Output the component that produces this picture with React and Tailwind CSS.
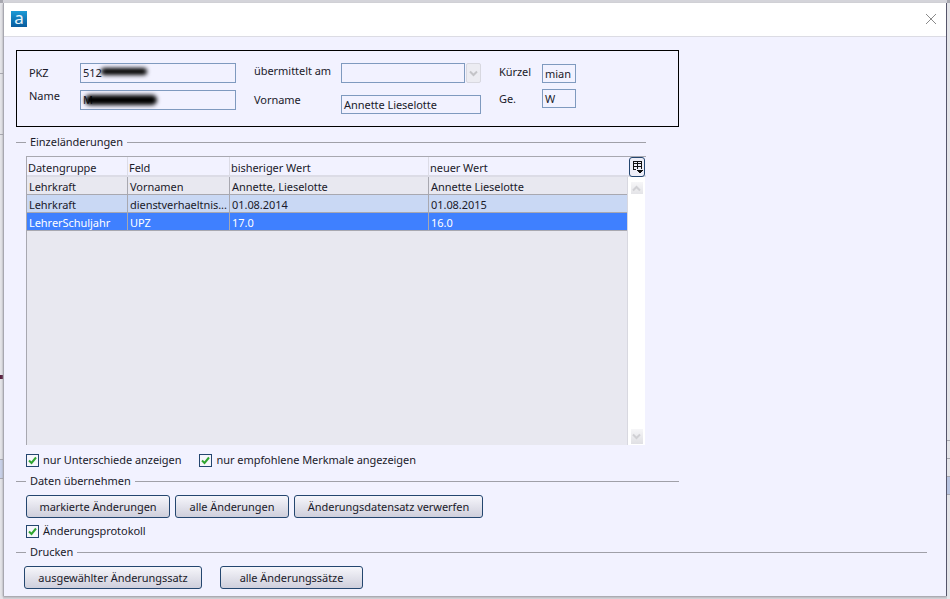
function Legend({ title, width }) {
  return (
    <div className="flex items-center h-[14px]" style={{ width }}>
      <div className="w-[10px] h-px bg-[#a0a0a8]" />
      <span className="px-[4px] text-[#1a1a2a] tracking-[-0.05px]">{title}</span>
      <div className="flex-1 h-px bg-[#a0a0a8]" />
    </div>
  );
}

function Btn({ children, w }) {
  return (
    <button
      style={{ width: w }}
      className="h-[23px] rounded-[3px] border border-[#24466f] bg-gradient-to-b from-[#f6f6fb] to-[#cfcfdc] text-[#1a1a2a] tracking-[-0.05px] flex items-center justify-center"
    >
      {children}
    </button>
  );
}

function Check({ label }) {
  return (
    <div className="flex items-center gap-[4px]">
      <div className="w-[13px] h-[13px] border border-[#24466f] bg-[#f6f6fb] flex items-center justify-center">
        <svg width="11" height="11" viewBox="0 0 11 11">
          <path d="M2 5.5 L4.5 8 L9 2.5" fill="none" stroke="#2fa52f" strokeWidth="2" />
        </svg>
      </div>
      <span className="text-[#1a1a2a] tracking-[-0.05px]">{label}</span>
    </div>
  );
}

function Input({ w, h = "h-[20px]", children }) {
  return (
    <div
      style={{ width: w }}
      className={`${h} relative border border-[#7f9abf] bg-[#f2f2ff] flex items-center pl-[2px] text-[#1a1a2a] tracking-[-0.05px] overflow-hidden`}
    >
      {children}
    </div>
  );
}

const rows = [
  { a: "Lehrkraft", b: "Vornamen", c: "Annette, Lieselotte", d: "Annette Lieselotte", bg: "bg-[#e8e8f0]", text: "text-[#1a1a2a]" },
  { a: "Lehrkraft", b: "dienstverhaeltnis...", c: "01.08.2014", d: "01.08.2015", bg: "bg-[#c9d8f4]", text: "text-[#1a1a2a]" },
  { a: "LehrerSchuljahr", b: "UPZ", c: "17.0", d: "16.0", bg: "bg-[#3f80ff]", text: "text-white" },
];

function Row({ r }) {
  return (
    <div className={`grid grid-cols-[101px_102px_199px_198px] h-[18px] border-b border-[#a8a8b0] ${r.bg} ${r.text} tracking-[-0.05px]`}>
      {[r.a, r.b, r.c].map((t, i) => (
        <div key={i} className="pl-[2px] pt-[2px] border-r border-[#a8a8b0] leading-[15px] whitespace-nowrap">{t}</div>
      ))}
      <div className="pl-[2px] pt-[2px] leading-[15px]">{r.d}</div>
    </div>
  );
}

function Side({ bands }) {
  return (
    <div className="w-[3px] h-full flex flex-col bg-[#e4e4e8]">
      {bands.map((b, i) => (
        <div key={i} style={{ height: b[0], background: b[1] }} />
      ))}
    </div>
  );
}

export default function App() {
  return (
    <div className="w-[950px] h-[599px] bg-[#d4d4da] flex overflow-hidden text-[11px] leading-[14px]" style={{ fontFamily: '"Noto Sans", sans-serif' }}>
      <Side bands={[[3, "#a8a8b0"], [70, "#e4e4e8"], [1, "#a8a8b0"], [60, "#e4e4e8"], [1, "#a8a8b0"], [240, "#e4e4e8"], [4, "#5a2040"], [80, "#e4e4e8"], [1, "#a8a8b0"], [18, "#c8d0e8"], [1, "#a8a8b0"]]} />

      <div className="w-[944px] mt-[3px] h-[593px] flex flex-col bg-[#f2f2ff] border-l border-[#a8a8b0] border-r-[1px] border-r-[#55556a] shadow-[0_1px_2px_#9a9aa0]">
        {/* title bar */}
        <div className="h-[34px] shrink-0 bg-white border-b border-[#dcdce4] flex items-center justify-between pl-[7px] pr-[9px] pb-[2px]">
          <div className="w-[16px] h-[16px] bg-gradient-to-b from-[#1a9ad6] to-[#0a5c9e] flex items-center justify-center text-[#e8f4fa] text-[17px] leading-[16px] pb-[2px]">a</div>
          <svg width="12" height="12" viewBox="0 0 12 12">
            <path d="M1 1 L11 11 M11 1 L1 11" stroke="#8a8a8a" strokeWidth="1" />
          </svg>
        </div>

        {/* person box */}
        <div className="ml-[12px] mt-[13px] w-[663px] h-[77px] shrink-0 border border-black flex pl-[12px] text-[#1a1a2a] tracking-[-0.05px]">
          <div className="w-[51px] pt-[15px] flex flex-col gap-[9px]">
            <span>PKZ</span>
            <span>Name</span>
          </div>
          <div className="w-[156px] pt-[12px] flex flex-col gap-[7px]">
            <Input w={156}>
              <span>512</span>
              <div className="absolute left-[20px] top-[4px] w-[46px] h-[7px] bg-black blur-[2px] rounded-full" />
            </Input>
            <Input w={156}>
              <span>M</span>
              <div className="absolute left-[4px] top-[4px] w-[72px] h-[10px] bg-black blur-[2px] rounded-full" />
            </Input>
          </div>
          <div className="w-[87px] ml-[18px] pt-[13px] flex flex-col gap-[15px]">
            <span>übermittelt am</span>
            <span>Vorname</span>
          </div>
          <div className="w-[140px] pt-[12px] flex flex-col gap-[12px]">
            <div className="flex gap-px">
              <Input w={124} />
              <div className="w-[15px] h-[20px] border border-[#d8d8e0] rounded-[2px] bg-[#ececf2] flex items-center justify-center">
                <svg width="9" height="7" viewBox="0 0 9 7">
                  <path d="M1 1.5 L4.5 5 L8 1.5" fill="none" stroke="#c4c4c8" strokeWidth="2" />
                </svg>
              </div>
            </div>
            <Input w={140} h="h-[19px]">Annette Lieselotte</Input>
          </div>
          <div className="w-[43px] ml-[18px] pt-[14px] flex flex-col gap-[13px]">
            <span>Kürzel</span>
            <span>Ge.</span>
          </div>
          <div className="w-[34px] pt-[13px] flex flex-col gap-[6px]">
            <Input w={34} h="h-[19px]">mian</Input>
            <Input w={34} h="h-[19px]">W</Input>
          </div>
        </div>

        <div className="ml-[12px] mt-[8px]">
          <Legend title="Einzeländerungen" width={630} />
        </div>

        {/* table */}
        <div className="ml-[22px] mt-[7px] w-[620px] h-[289px] shrink-0 flex flex-col border-t border-l border-[#a8a8b0]">
          <div className="h-[20px] shrink-0 flex border-b-2 border-[#dcdce6]">
            <div className="w-[601px] grid grid-cols-[101px_102px_199px_198px] text-[#1a1a2a] tracking-[-0.05px]">
              {["Datengruppe", "Feld", "bisheriger Wert", "neuer Wert"].map((h) => (
                <div key={h} className="border-r border-[#dcdce6] pl-[1px] pt-[2px] leading-[17px] last:border-r-0">{h}</div>
              ))}
            </div>
            <div className="w-[16px] h-[20px] ml-[1px] border border-[#24466f] rounded-[3px] bg-[#eeeef8] flex items-center justify-center">
              <svg width="11" height="14" viewBox="0 0 11 14" shapeRendering="crispEdges">
                <path d="M1.5 1 H9.5 V9 M1.5 1 V9.5 H3.5 M1.5 3.5 H9.5 M1.5 6.5 H9.5 M5.5 1 V9" fill="none" stroke="#111" strokeWidth="1" />
                <path d="M4 10 H11 L7.5 13.5 Z" fill="#111" />
              </svg>
            </div>
          </div>
          <div className="flex flex-1 min-h-0">
            <div className="w-[601px] bg-[#e8e8f0] border-r border-[#d8d8e0]">
              {rows.map((r, i) => (
                <Row key={i} r={r} />
              ))}
            </div>
            <div className="w-[17px] bg-white flex flex-col items-center justify-between pt-[5px] pb-[1px]">
              <div className="w-[12px] h-[12px] bg-gradient-to-b from-[#f6f6f8] to-[#e4e4e8] flex items-center justify-center">
                <svg width="9" height="7" viewBox="0 0 9 7">
                  <path d="M1 5.5 L4.5 2 L8 5.5" fill="none" stroke="#d0d0d4" strokeWidth="2" />
                </svg>
              </div>
              <div className="w-[12px] h-[15px] bg-gradient-to-b from-[#f6f6f8] to-[#e0e0e4] flex items-center justify-center">
                <svg width="9" height="7" viewBox="0 0 9 7">
                  <path d="M1 1.5 L4.5 5 L8 1.5" fill="none" stroke="#d0d0d4" strokeWidth="2" />
                </svg>
              </div>
            </div>
          </div>
        </div>

        <div className="ml-[22px] mt-[8px] flex gap-[18px]">
          <Check label="nur Unterschiede anzeigen" />
          <Check label="nur empfohlene Merkmale angezeigen" />
        </div>

        <div className="ml-[12px] mt-[7px]">
          <Legend title="Daten übernehmen" width={663} />
        </div>

        <div className="ml-[22px] mt-[7px] flex gap-[5px]">
          <Btn w={144}>markierte Änderungen</Btn>
          <Btn w={114}>alle Änderungen</Btn>
          <Btn w={189}>Änderungsdatensatz verwerfen</Btn>
        </div>

        <div className="ml-[22px] mt-[6px]">
          <Check label="Änderungsprotokoll" />
        </div>

        <div className="ml-[12px] mt-[7px]">
          <Legend title="Drucken" width={911} />
        </div>

        <div className="ml-[20px] mt-[7px] flex gap-[18px]">
          <Btn w={178}>ausgewählter Änderungssatz</Btn>
          <Btn w={143}>alle Änderungssätze</Btn>
        </div>
      </div>

      <Side bands={[[3, "#a8a8b0"], [437, "#e4e4e8"], [1, "#a8a8b0"], [17, "#e4e4e8"], [1, "#a8a8b0"], [17, "#e4e4e8"], [1, "#a8a8b0"], [17, "#b8c4e0"], [1, "#a8a8b0"]]} />
    </div>
  );
}
